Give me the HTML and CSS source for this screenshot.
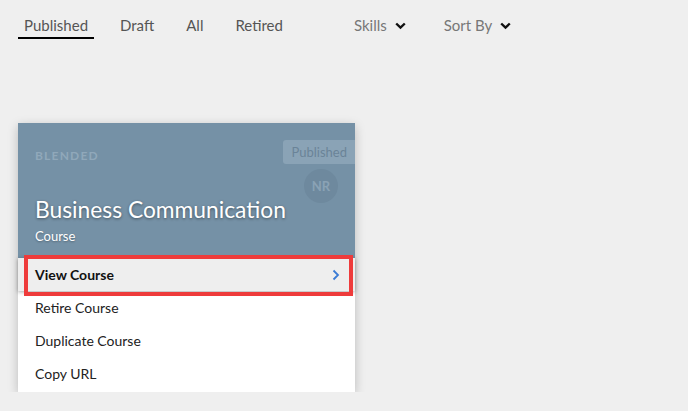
FILE: index.html
```html
<!DOCTYPE html>
<html>
<head>
<meta charset="utf-8">
<link rel="stylesheet" href="styles.css">
</head>
<body>
<div class="toolbar">
  <div class="tabs">
    <span class="tab active">Published</span>
    <span class="tab">Draft</span>
    <span class="tab">All</span>
    <span class="tab">Retired</span>
  </div>
  <div class="filters">
    <span class="filter">Skills <svg class="chev" width="11" height="8" viewBox="0 0 11 8"><path d="M1.2 1.5 L5.5 5.6 L9.8 1.5" fill="none" stroke="#111" stroke-width="2.4"/></svg></span>
    <span class="filter">Sort By <svg class="chev" width="11" height="8" viewBox="0 0 11 8"><path d="M1.2 1.5 L5.5 5.6 L9.8 1.5" fill="none" stroke="#111" stroke-width="2.4"/></svg></span>
  </div>
</div>

<div class="card">
  <div class="card-head">
    <div class="head-top">
      <span class="type">BLENDED</span>
      <div class="side">
        <span class="badge">Published</span>
        <span class="avatar">NR</span>
      </div>
    </div>
    <div class="title">Business Communication</div>
    <div class="subtitle">Course</div>
  </div>
  <div class="menu">
    <div class="item hover">
      <span>View Course</span>
      <svg width="8" height="12" viewBox="0 0 8 12"><path d="M1.5 1.5 L6 6 L1.5 10.5" fill="none" stroke="#3a7bd5" stroke-width="1.8"/></svg>
      <span class="mark"></span>
    </div>
    <div class="item">Retire Course</div>
    <div class="item">Duplicate Course</div>
    <div class="item">Copy URL</div>
  </div>
</div>
</body>
</html>
```

FILE: styles.css
```css
html, body {
  margin: 0;
  padding: 0;
  background: #efefef;
  font-family: "Lato", "Liberation Sans", sans-serif;
}
.toolbar {
  display: flex;
  align-items: flex-start;
  padding: 16px 0 0 18px;
}
.tabs {
  display: flex;
  gap: 20px;
}
.tab {
  font-size: 15px;
  color: #555;
  padding: 0 6px 3px;
  border-bottom: 2px solid transparent;
  line-height: 18px;
}
.tab.active {
  border-bottom-color: #000;
}
.filters {
  display: flex;
  gap: 38px;
  margin-left: 65px;
}
.filter {
  font-size: 15px;
  color: #777;
  line-height: 18px;
  display: flex;
  align-items: center;
  gap: 8px;
}
.chev {
  margin-top: 2px;
}
.card {
  margin: 84px 0 0 18px;
  width: 337px;
  background: #fff;
  box-shadow: 0 3px 10px rgba(0,0,0,0.22);
}
.card-head {
  background: #7591a6;
  height: 135px;
  box-sizing: border-box;
  padding: 17px 0 0 17px;
  display: flex;
  flex-direction: column;
}
.head-top {
  display: flex;
  justify-content: space-between;
  height: 56px;
}
.type {
  font-size: 12px;
  font-weight: bold;
  letter-spacing: 1.2px;
  color: #90a8ba;
  margin-top: 8px;
}
.side {
  display: flex;
  flex-direction: column;
  align-items: flex-end;
}
.badge {
  background: #8aa3b6;
  color: #6a8398;
  font-size: 13px;
  line-height: 24px;
  padding: 0 8px 0 9px;
  border-radius: 3px 0 0 3px;
}
.avatar {
  flex-shrink: 0;
  width: 34px;
  height: 34px;
  border-radius: 50%;
  background: #6e899e;
  color: #8aa2b5;
  font-size: 13px;
  font-weight: bold;
  display: flex;
  align-items: center;
  justify-content: center;
  margin: 5px 17px 0 0;
}
.title {
  color: #fff;
  font-size: 22.8px;
  line-height: 26px;
  text-shadow: 0 1px 3px rgba(0,0,0,0.45);
}
.subtitle {
  color: #fff;
  font-size: 13px;
  margin-top: 6px;
  text-shadow: 0 1px 2px rgba(0,0,0,0.3);
}
.menu {
  padding-bottom: 2px;
}
.item {
  height: 33px;
  display: flex;
  align-items: center;
  justify-content: space-between;
  padding: 0 15px 0 17px;
  font-size: 14px;
  color: #222;
  position: relative;
}
.item.hover {
  background: #eeeeee;
  font-weight: bold;
  color: #111;
  box-shadow: 0 1px 4px rgba(0,0,0,0.35);
}
.mark {
  position: absolute;
  left: 6px;
  right: 2px;
  top: -3px;
  bottom: -5px;
  border: 4px solid #ee3b3b;
}
```
